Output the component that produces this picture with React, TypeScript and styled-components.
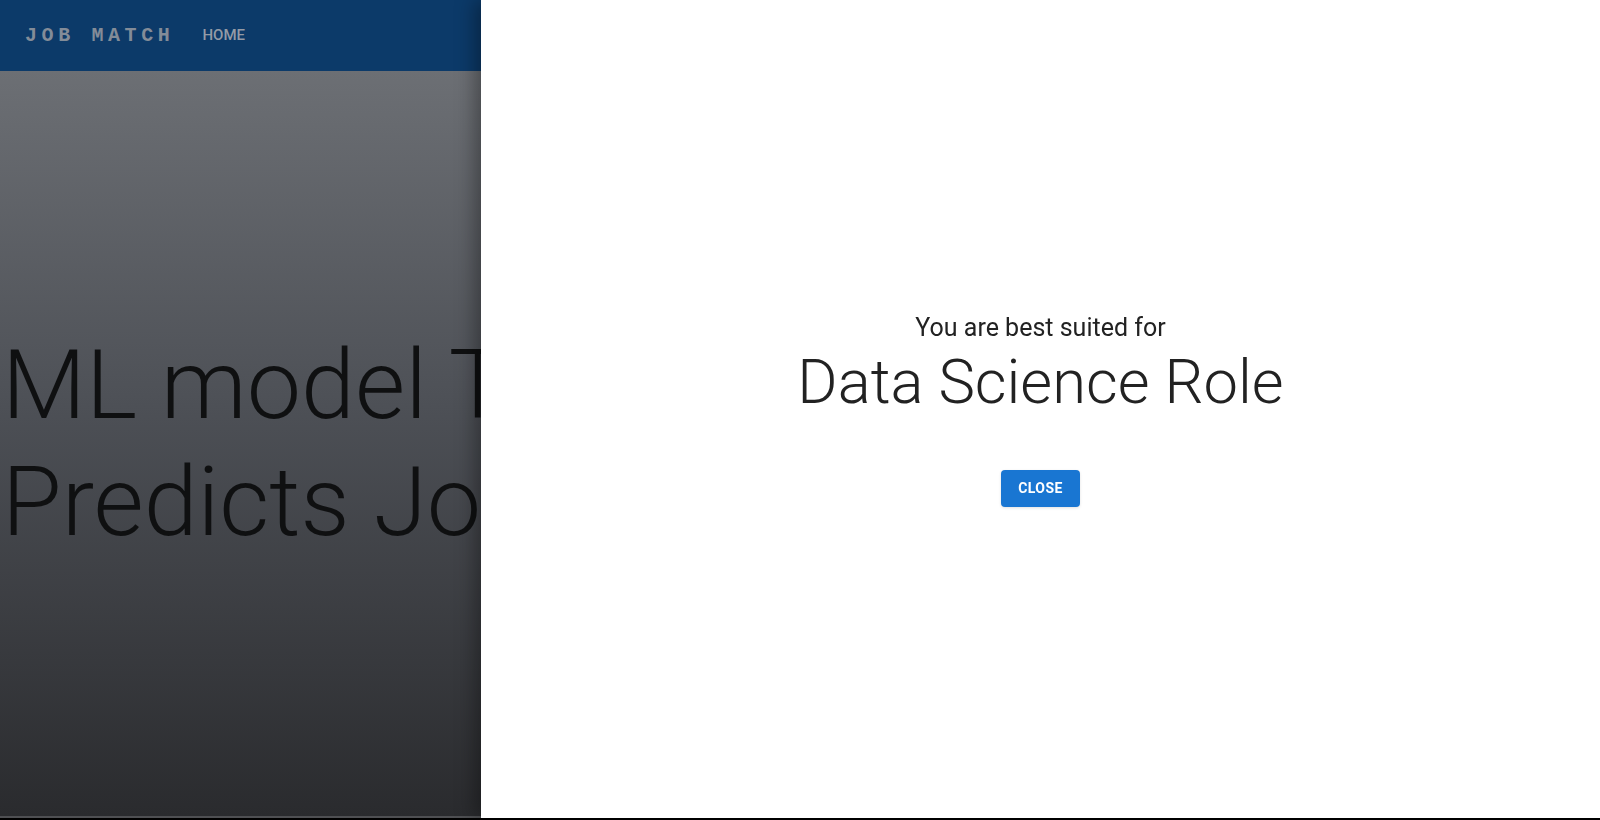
import React from 'react';
import styled, { createGlobalStyle } from 'styled-components';

const GlobalStyle = createGlobalStyle`
  html, body {
    margin: 0;
    padding: 0;
    background: #000;
    overflow: hidden;
  }
  body {
    font-family: Roboto, "Noto Sans", Arial, sans-serif;
  }
`;

const Page = styled.div`
  width: 1600px;
  height: 820px;
  display: flex;
  flex-direction: column;
`;

const Header = styled.header`
  height: 71px;
  flex-shrink: 0;
  display: flex;
  align-items: center;
  padding: 0 24px 0 25px;
  box-sizing: border-box;
  background-color: #0c3a69;
`;

const Brand = styled.span`
  font-family: 'Liberation Mono', 'DejaVu Sans Mono', monospace;
  font-weight: 700;
  font-size: 20px;
  letter-spacing: 4.6px;
  color: #838c98;
  margin-right: 20px;
`;

const NavLink = styled.a`
  font-family: Roboto, sans-serif;
  font-weight: 500;
  font-size: 15px;
  text-transform: uppercase;
  color: #939ba6;
  padding: 6px 8px;
  margin-top: -2px;
  cursor: pointer;
`;

const Hero = styled.section`
  height: 745px;
  flex-shrink: 0;
  display: flex;
  flex-direction: column;
  justify-content: center;
  background: linear-gradient(180deg, #6c6f74 0%, #4d5056 45%, #2a2b2e 100%);
`;

const HeroTitle = styled.h1`
  margin: 0;
  padding-left: 2px;
  font-family: Roboto, sans-serif;
  font-weight: 300;
  font-size: 97px;
  line-height: 117px;
  color: #0f1011;
  white-space: nowrap;
`;

const EdgeLine = styled.div<{ $color: string }>`
  height: 2px;
  flex-shrink: 0;
  background: ${(p) => p.$color};
`;

const Panel = styled.div`
  position: fixed;
  top: 0;
  left: 481px;
  right: 0;
  height: 818px;
  background: #fff;
  box-shadow: -6px 0 18px rgba(0, 0, 0, 0.35);
  display: flex;
  flex-direction: column;
  align-items: center;
  justify-content: center;
`;

const Subtitle = styled.div`
  font-family: Roboto, sans-serif;
  font-weight: 400;
  font-size: 25px;
  line-height: 32px;
  color: #222;
`;

const Result = styled.div`
  font-family: Roboto, sans-serif;
  font-weight: 300;
  font-size: 61.5px;
  line-height: 72px;
  color: #222;
  margin-top: 2px;
`;

const CloseButton = styled.button`
  margin-top: 52px;
  height: 37px;
  width: 79px;
  padding: 0;
  border: none;
  border-radius: 4px;
  background-color: #1976d2;
  color: #fff;
  font-family: Roboto, sans-serif;
  font-weight: 700;
  font-size: 14px;
  letter-spacing: 0.02857em;
  text-transform: uppercase;
  box-shadow: 0 1px 3px rgba(0, 0, 0, 0.12);
  cursor: pointer;
`;

export default function App() {
  return (
    <>
      <GlobalStyle />
      <Page>
        <Header>
          <Brand>JOB MATCH</Brand>
          <NavLink>Home</NavLink>
        </Header>
        <Hero>
          <HeroTitle>ML model That</HeroTitle>
          <HeroTitle>Predicts Job Role</HeroTitle>
        </Hero>
        <EdgeLine $color="#4f5053" />
        <EdgeLine $color="#000" />
      </Page>
      <Panel>
        <Subtitle>You are best suited for</Subtitle>
        <Result>Data Science Role</Result>
        <CloseButton>Close</CloseButton>
      </Panel>
    </>
  );
}
